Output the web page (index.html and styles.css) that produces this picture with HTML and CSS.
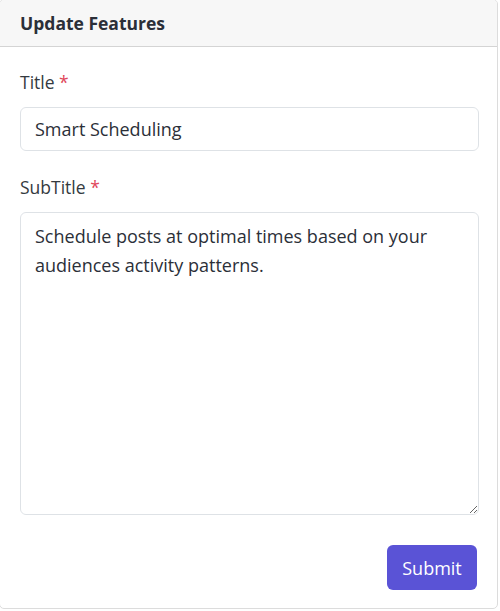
FILE: index.html
```html
<!DOCTYPE html>
<html>
<head>
<meta charset="utf-8">
<link rel="stylesheet" href="styles.css">
</head>
<body>
<div class="card">
  <div class="card-header">Update Features</div>
  <div class="card-body">
    <div class="field">
      <label class="label">Title <span class="req">*</span></label>
      <input class="control" type="text" value="Smart Scheduling">
    </div>
    <div class="field">
      <label class="label">SubTitle <span class="req">*</span></label>
      <textarea class="control area">Schedule posts at optimal times based on your audiences activity patterns.</textarea>
    </div>
    <div class="actions">
      <button class="btn">Submit</button>
    </div>
  </div>
</div>
</body>
</html>
```
FILE: styles.css
```css
html, body { margin: 0; padding: 0; background: #fff; }
body { font-family: "Open Sans", "Noto Sans", sans-serif; color: #343a40; }
.card {
  margin: -1px 0 0 -1px;
  width: 499px;
  height: 610px;
  box-sizing: border-box;
  border: 1px solid #dcdcdc;
  border-radius: 5px;
  overflow: hidden;
  display: flex;
  flex-direction: column;
}
.card-header {
  height: 47px;
  box-sizing: border-box;
  background: #f7f7f7;
  border-bottom: 1px solid #d4d4d4;
  padding: 0 20px;
  display: flex;
  align-items: center;
  font-weight: 700;
  font-size: 17.5px;
  color: #2b2f38;
}
.card-body { padding: 23px 20px 0 20px; display: flex; flex-direction: column; }
.field { display: flex; flex-direction: column; }
.label { font-size: 17.5px; line-height: 24px; margin-bottom: 13px; color: #343a40; }
.req { color: #e0475a; }
.control {
  font-family: inherit;
  font-size: 18px;
  color: #2b2f38;
  border: 1px solid #dee2e6;
  border-radius: 6px;
  padding: 0 14px;
  height: 44px;
  width: 459px;
  box-sizing: border-box;
  margin: 0;
  outline: none;
  background: #fff;
}
.field + .field { margin-top: 24px; }
.area {
  height: 303px;
  padding: 9px 14px;
  line-height: 29px;
  resize: vertical;
}
.actions { display: flex; justify-content: flex-end; margin-top: 30px; }
.btn {
  font-family: inherit;
  font-size: 18px;
  color: #fff;
  background: #5a53d6;
  border: none;
  border-radius: 6px;
  width: 90px;
  height: 45px;
  margin: 0;
}
```
